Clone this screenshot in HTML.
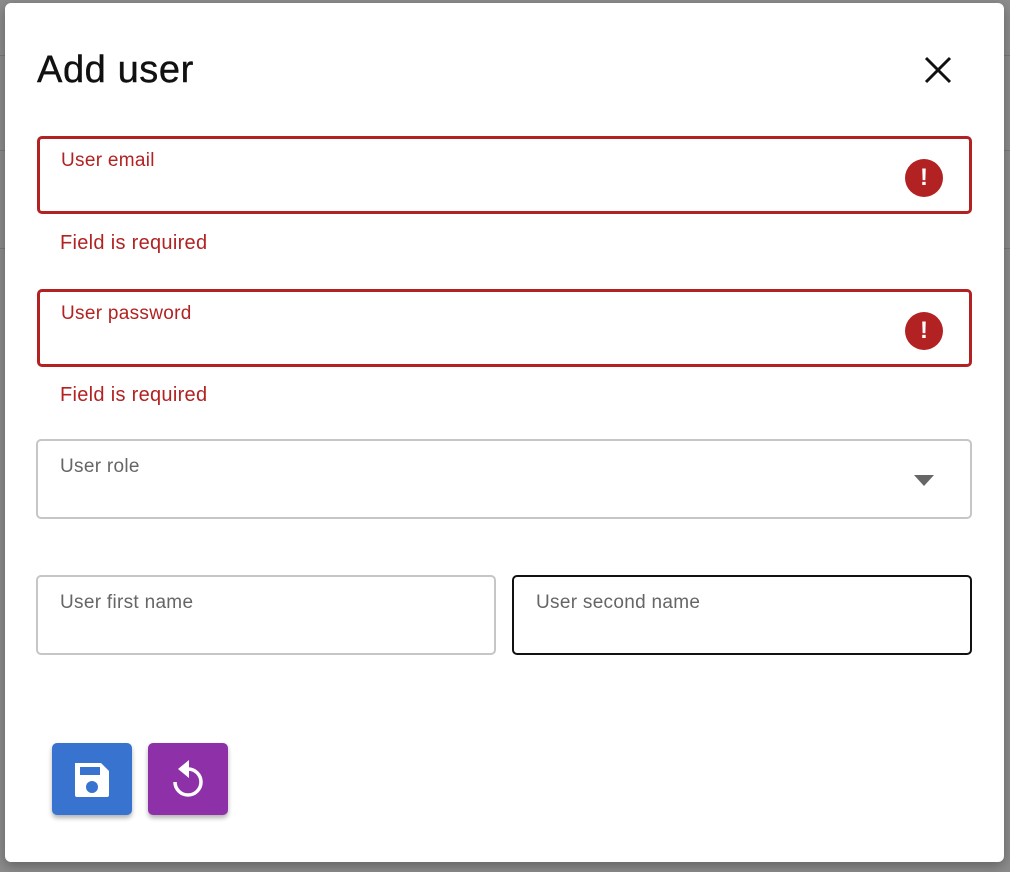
<!DOCTYPE html><html><head><style>
body{margin:0;width:1010px;height:872px;background:#8c8c8c;font-family:"Liberation Sans",sans-serif;position:relative;overflow:hidden}
.bgl{position:absolute;left:0;right:0;height:1px;background:#7a7a7a}
.dlg{position:absolute;left:5px;top:3px;width:999px;height:859px;background:#fff;border-radius:6px;box-shadow:0 4px 12px rgba(0,0,0,.3)}
h1{position:absolute;left:32px;top:46px;margin:0;font-size:38px;font-weight:normal;color:#111;letter-spacing:0.6px;-webkit-text-stroke:0.4px #111}
.f{position:absolute;box-sizing:border-box;border:2px solid #c6c6c6;border-radius:5px}
.f span{position:absolute;left:22px;top:15px;font-size:19px;color:#666;letter-spacing:0.3px}
.err{border:3px solid #b22222}
.err span{left:21px;top:11px;color:#b22222}
.ic{position:absolute;right:26px;top:20px;width:38px;height:38px;border-radius:50%;background:#b22222;color:#fff;font-weight:bold;font-size:24px;text-align:center;line-height:38px}
.msg{position:absolute;left:55px;font-size:20px;color:#b22222;letter-spacing:0.3px}
.btn{position:absolute;top:740px;width:80px;height:72px;border-radius:5px;box-shadow:0 3px 5px rgba(0,0,0,.3)}
</style></head><body>
<div class="bgl" style="top:55px"></div><div class="bgl" style="top:150px"></div><div class="bgl" style="top:248px"></div>
<div class="dlg">
<h1>Add user</h1>
<svg style="position:absolute;left:918px;top:52px" width="30" height="30" viewBox="0 0 30 30"><path d="M3 3L27 27M27 3L3 27" stroke="#111" stroke-width="3"/></svg>
<div class="f err" style="left:32px;top:133px;width:935px;height:78px"><span>User email</span><div class="ic">!</div></div>
<div class="msg" style="top:229px">Field is required</div>
<div class="f err" style="left:32px;top:286px;width:935px;height:78px"><span>User password</span><div class="ic">!</div></div>
<div class="msg" style="top:381px">Field is required</div>
<div class="f" style="left:31px;top:436px;width:936px;height:80px"><span>User role</span>
<svg style="position:absolute;right:36px;top:34px" width="20" height="12"><path d="M0 0L20 0L10 11Z" fill="#666"/></svg></div>
<div class="f" style="left:31px;top:572px;width:460px;height:80px"><span>User first name</span></div>
<div class="f" style="left:507px;top:572px;width:460px;height:80px;border-color:#111"><span>User second name</span></div>
<div class="btn" style="left:47px;background:#3874cf"><svg style="position:absolute;left:21px;top:18px" width="36" height="36" viewBox="0 0 36 36"><path d="M2 2H28L36 10V34Q36 36 34 36H4Q2 36 2 34Z" fill="#fff"/><rect x="7" y="6" width="20" height="8" fill="#3874cf"/><circle cx="19" cy="26" r="6" fill="#3874cf"/></svg></div>
<div class="btn" style="left:143px;background:#8e30a8"><svg style="position:absolute;left:20px;top:14px" width="40" height="44" viewBox="0 0 40 44"><path d="M20 12A13 13 0 1 1 7 25" fill="none" stroke="#fff" stroke-width="3.5"/><path d="M21 3L10 12L21 21Z" fill="#fff"/></svg></div>
</div>
</body></html>
